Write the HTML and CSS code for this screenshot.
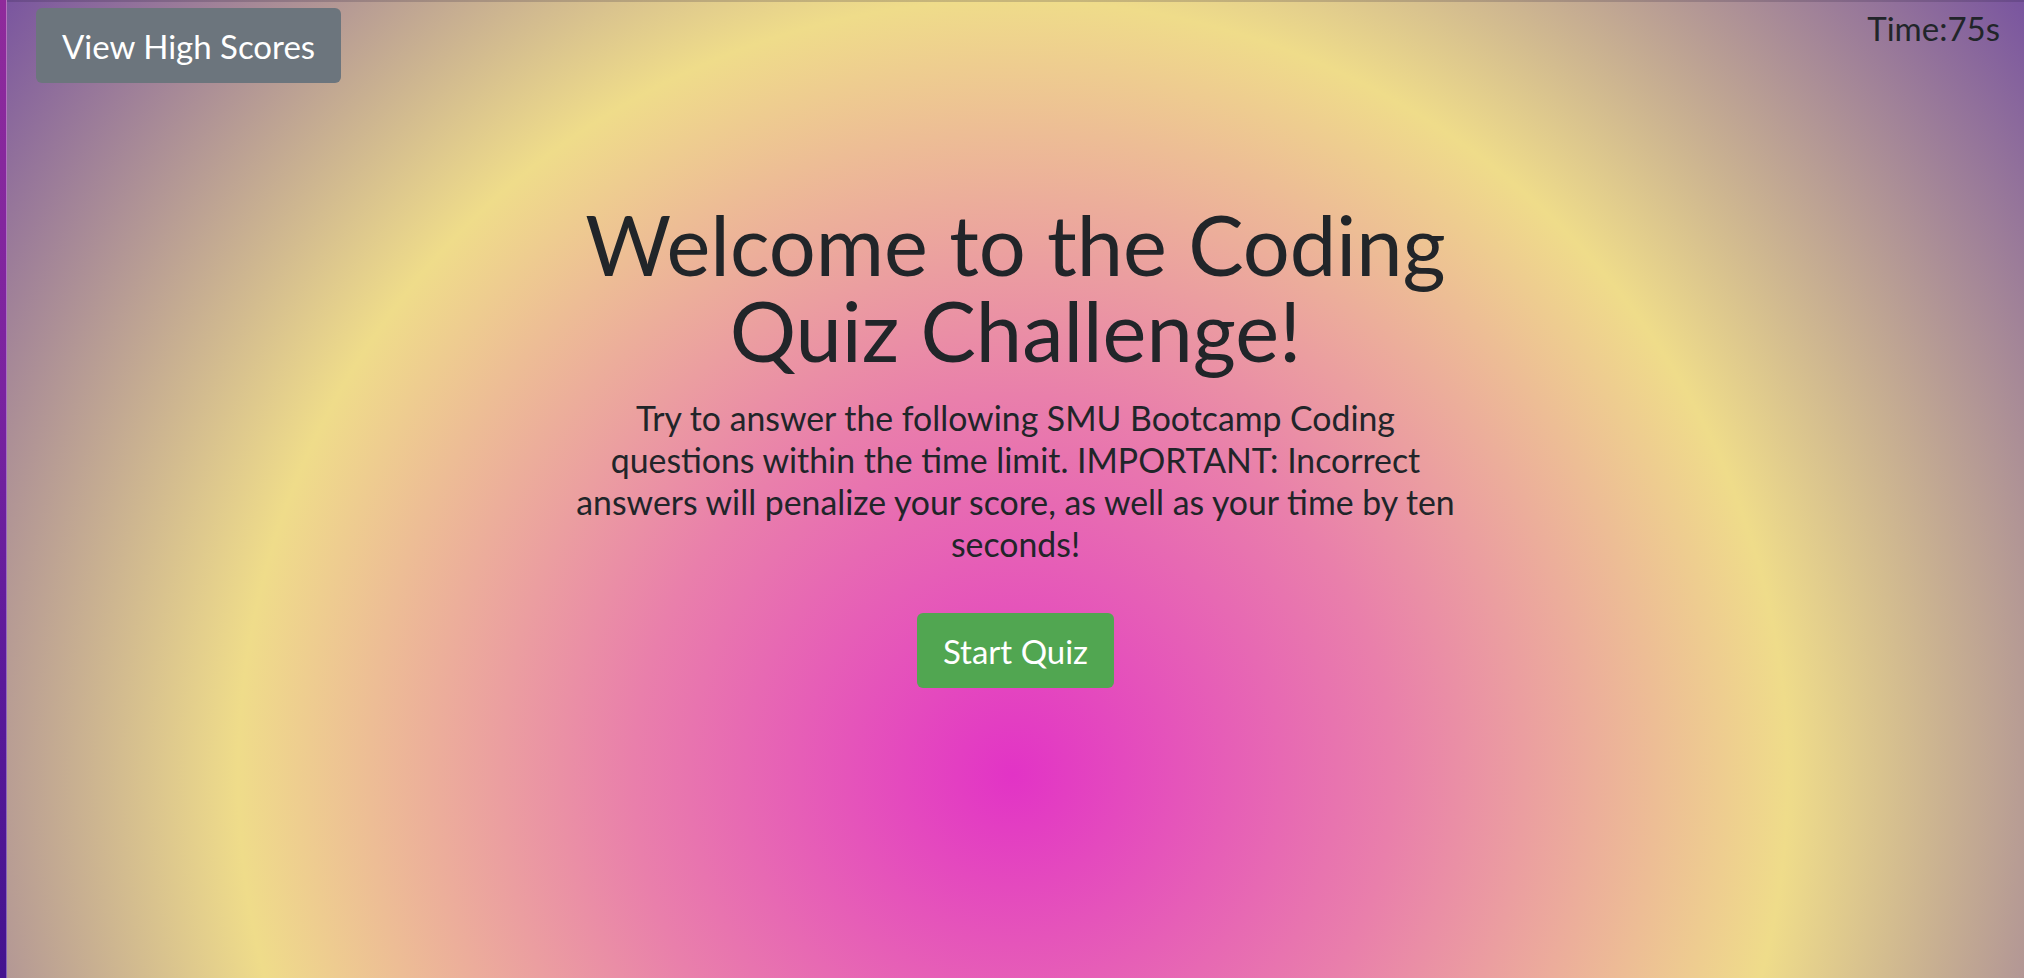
FILE: index.html
```html
<!DOCTYPE html>
<html lang="en">
<head>
<meta charset="utf-8">
<title>Coding Quiz Challenge</title>
<link rel="stylesheet" href="styles.css">
</head>
<body>
<div class="frame">
  <div class="edge"></div>
  <main class="page">
    <header class="topbar">
      <button class="btn btn-scores" type="button">View High Scores</button>
      <div class="timer">Time:75s</div>
    </header>
    <section class="intro">
      <h1 class="title">Welcome to the Coding Quiz Challenge!</h1>
      <p class="lead">Try to answer the following SMU Bootcamp Coding<br>questions within the time limit. IMPORTANT: Incorrect<br>answers will penalize your score, as well as your time by ten<br>seconds!</p>
      <button class="btn btn-start" type="button">Start Quiz</button>
    </section>
  </main>
</div>
</body>
</html>
```
FILE: styles.css
```css
* { box-sizing: border-box; }
html, body { margin: 0; padding: 0; }
body {
  font-family: Lato, "Open Sans", sans-serif;
  color: #212529;
  overflow: hidden;
}
.frame {
  display: flex;
  height: 978px;
}
.edge {
  width: 7px;
  flex: none;
  background: linear-gradient(#8f2a9b, #7a23a0 40%, #5a1a9a 70%, #43138f);
  border-right: 1px solid rgba(255, 255, 255, 0.35);
}
.page {
  flex: 1;
  border-top: 2px solid rgba(40, 30, 60, 0.2);
  background: radial-gradient(circle at 1006px 775px, #e233c6 0, #e97fab 380px, #efdc8a 775px, #7550a0 1290px);
  background-origin: border-box;
  display: flex;
  flex-direction: column;
}
.topbar {
  display: flex;
  justify-content: space-between;
  align-items: flex-start;
  padding: 6px 24px 0 29px;
}
.btn {
  font-family: Lato, "Open Sans", sans-serif;
  font-size: 33px;
  line-height: 39px;
  color: #fff;
  border: 0;
  border-radius: 6px;
  cursor: pointer;
}
.btn-scores {
  background: #6c757d;
  padding: 19px 26px 17px;
}
.timer {
  font-size: 33px;
  line-height: 40px;
}
.intro {
  width: 960px;
  margin: 0 auto;
  padding-top: 118px;
  display: flex;
  flex-direction: column;
  align-items: center;
  text-align: center;
}
.title {
  font-size: 83px;
  line-height: 86px;
  font-weight: 400;
  margin: 0 0 24px;
}
.lead {
  font-size: 33.8px;
  line-height: 42px;
  margin: 0 0 48px;
}
.btn-start {
  background: #51a651;
  padding: 19px 26px 17px;
}
```
